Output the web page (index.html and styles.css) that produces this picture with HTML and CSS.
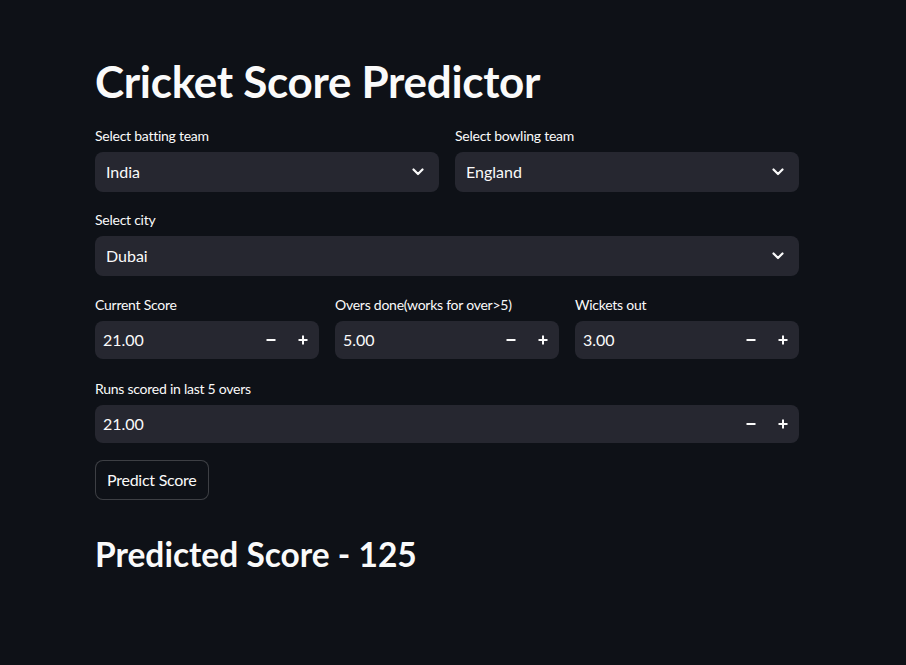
FILE: index.html
```html
<!DOCTYPE html>
<html lang="en">
<head>
<meta charset="utf-8">
<title>Cricket Score Predictor</title>
<link rel="stylesheet" href="styles.css">
</head>
<body>
<main class="main">
  <h1 class="title">Cricket Score Predictor</h1>

  <div class="row two">
    <div class="field">
      <div class="lbl">Select batting team</div>
      <div class="select">
        <span class="val">India</span>
        <svg class="chev" width="12" height="8" viewBox="0 0 12 8"><path d="M1.5 1.5 L6 6 L10.5 1.5" fill="none" stroke="#fafafa" stroke-width="2.2" stroke-linecap="round" stroke-linejoin="round"/></svg>
      </div>
    </div>
    <div class="field">
      <div class="lbl">Select bowling team</div>
      <div class="select">
        <span class="val">England</span>
        <svg class="chev" width="12" height="8" viewBox="0 0 12 8"><path d="M1.5 1.5 L6 6 L10.5 1.5" fill="none" stroke="#fafafa" stroke-width="2.2" stroke-linecap="round" stroke-linejoin="round"/></svg>
      </div>
    </div>
  </div>

  <div class="field city">
    <div class="lbl">Select city</div>
    <div class="select">
      <span class="val">Dubai</span>
      <svg class="chev" width="12" height="8" viewBox="0 0 12 8"><path d="M1.5 1.5 L6 6 L10.5 1.5" fill="none" stroke="#fafafa" stroke-width="2.2" stroke-linecap="round" stroke-linejoin="round"/></svg>
    </div>
  </div>

  <div class="row three">
    <div class="field">
      <div class="lbl">Current Score</div>
      <div class="num">
        <span class="val">21.00</span>
        <span class="step"><svg width="10" height="10" viewBox="0 0 10 10"><path d="M0.5 5 H9.5" stroke="#fafafa" stroke-width="2"/></svg></span>
        <span class="step"><svg width="10" height="10" viewBox="0 0 10 10"><path d="M0.5 5 H9.5 M5 0.5 V9.5" stroke="#fafafa" stroke-width="2"/></svg></span>
      </div>
    </div>
    <div class="field">
      <div class="lbl">Overs done(works for over&gt;5)</div>
      <div class="num">
        <span class="val">5.00</span>
        <span class="step"><svg width="10" height="10" viewBox="0 0 10 10"><path d="M0.5 5 H9.5" stroke="#fafafa" stroke-width="2"/></svg></span>
        <span class="step"><svg width="10" height="10" viewBox="0 0 10 10"><path d="M0.5 5 H9.5 M5 0.5 V9.5" stroke="#fafafa" stroke-width="2"/></svg></span>
      </div>
    </div>
    <div class="field">
      <div class="lbl">Wickets out</div>
      <div class="num">
        <span class="val">3.00</span>
        <span class="step"><svg width="10" height="10" viewBox="0 0 10 10"><path d="M0.5 5 H9.5" stroke="#fafafa" stroke-width="2"/></svg></span>
        <span class="step"><svg width="10" height="10" viewBox="0 0 10 10"><path d="M0.5 5 H9.5 M5 0.5 V9.5" stroke="#fafafa" stroke-width="2"/></svg></span>
      </div>
    </div>
  </div>

  <div class="field runs">
    <div class="lbl">Runs scored in last 5 overs</div>
    <div class="num">
      <span class="val">21.00</span>
      <span class="step"><svg width="10" height="10" viewBox="0 0 10 10"><path d="M0.5 5 H9.5" stroke="#fafafa" stroke-width="2"/></svg></span>
      <span class="step"><svg width="10" height="10" viewBox="0 0 10 10"><path d="M0.5 5 H9.5 M5 0.5 V9.5" stroke="#fafafa" stroke-width="2"/></svg></span>
    </div>
  </div>

  <div class="actions"><button class="btn">Predict Score</button></div>

  <h2 class="result">Predicted Score - 125</h2>
</main>
</body>
</html>
```
FILE: styles.css
```css
html, body {
  margin: 0;
  background: #0e1117;
  color: #fafafa;
  font-family: "Source Sans Pro", Lato, "Noto Sans", sans-serif;
}
.main {
  width: 704px;
  margin-left: 95px;
  padding-top: 55px;
  display: flex;
  flex-direction: column;
}
.title {
  margin: 0;
  font-size: 44px;
  font-weight: 700;
  line-height: 53px;
  letter-spacing: -0.3px;
}
.row {
  display: grid;
  gap: 16px;
}
.row.two { grid-template-columns: 1fr 1fr; margin-top: 17px; }
.row.three { grid-template-columns: 1fr 1fr 1fr; margin-top: 18px; }
.city { margin-top: 17px; }
.runs { margin-top: 19px; }
.field { display: flex; flex-direction: column; }
.lbl {
  font-size: 14px;
  line-height: 21px;
  height: 21px;
  padding-bottom: 1px;
  margin-bottom: 5px;
  color: #fafafa;
  letter-spacing: -0.25px;
}
.select {
  height: 40px;
  background: #262730;
  border-radius: 8px;
  display: flex;
  align-items: center;
  padding: 0 15px 2px 11px;
  box-sizing: border-box;
}
.select .val { flex: 1; font-size: 16px; }
.chev { display: block; margin-top: 2px; }
.num {
  height: 38px;
  background: #262730;
  border-radius: 8px;
  display: flex;
  align-items: center;
  padding-left: 8px;
  box-sizing: border-box;
}
.num .val { flex: 1; font-size: 16px; padding-bottom: 2px; }
.step {
  width: 32px;
  height: 38px;
  display: flex;
  align-items: center;
  justify-content: center;
}
.step svg { display: block; }
.actions { margin-top: 17px; display: flex; }
.btn {
  height: 40px;
  padding: 0 11px 2px;
  background: #0e1117;
  color: #fafafa;
  border: 1px solid rgba(250, 250, 250, 0.2);
  border-radius: 8px;
  font-family: inherit;
  font-size: 16px;
  letter-spacing: -0.25px;
}
.result {
  margin: 33px 0 0;
  font-size: 33.5px;
  font-weight: 700;
  line-height: 43px;
}
```
